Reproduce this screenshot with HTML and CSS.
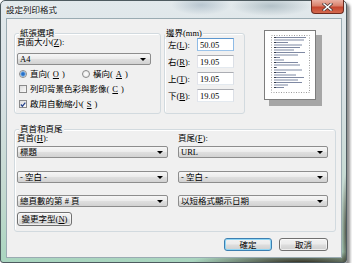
FILE: index.html
```html
<!DOCTYPE html>
<html lang="zh-Hant">
<head>
  <meta charset="UTF-8" />
  <meta name="viewport" content="width=device-width, initial-scale=1.0"/>
  <title>設定列印格式</title>
  <link rel="stylesheet" href="styles.css">
</head>
<body>
  <div class="window">
    <div class="titlebar">
      <span class="title">設定列印格式</span>
      <div class="close-btn">
        <svg width="11" height="8" viewBox="0 0 11 8">
          <path d="M2 1 L9 7 M9 1 L2 7" stroke="#4b3b3b" stroke-width="3" stroke-linecap="square"/>
          <path d="M2 1 L9 7 M9 1 L2 7" stroke="#ffffff" stroke-width="1.5" stroke-linecap="square"/>
        </svg>
      </div>
    </div>

    <div class="client">
      <div class="top-row">
        <div class="group paper">
          <div class="group-title">紙張選項</div>
          <div class="label">頁面大小(<u>Z</u>):</div>
          <div class="combo combo-size"><span>A4</span><i class="arrow"></i></div>

          <div class="option-row radios">
            <span class="option first"><i class="radio checked"></i>直向(<u>O</u>)</span>
            <span class="option"><i class="radio"></i>橫向(<u>A</u>)</span>
          </div>
          <div class="option-row">
            <span class="option"><i class="check"></i>列印背景色彩與影像(<u>C</u>)</span>
          </div>
          <div class="option-row">
            <span class="option">
              <i class="check">
                <svg width="7" height="7" viewBox="0 0 7 7"><path d="M1 3.5 L2.8 5.5 L6.2 1.2" fill="none" stroke="#24428c" stroke-width="1.4"/></svg>
              </i>啟用自動縮小(<u>S</u>)
            </span>
          </div>
        </div>

        <div class="group margins">
          <div class="group-title">邊界(mm)</div>
          <div class="margin-rows">
            <div class="margin-row"><span class="margin-label">左(<u>L</u>):</span><input class="focused" type="text" value="50.05"></div>
            <div class="margin-row"><span class="margin-label">右(<u>R</u>):</span><input type="text" value="19.05"></div>
            <div class="margin-row"><span class="margin-label">上(<u>T</u>):</span><input type="text" value="19.05"></div>
            <div class="margin-row"><span class="margin-label">下(<u>B</u>):</span><input type="text" value="19.05"></div>
          </div>
        </div>

        <div class="preview">
          <svg width="58" height="76" viewBox="0 0 58 76">
            <rect x="5" y="5" width="53" height="71" fill="#a6a6a6"/>
            <rect x="0.5" y="0.5" width="51" height="69" fill="#ffffff" stroke="#7d7d7d"/>
            <rect x="7.5" y="5.5" width="38" height="57" fill="none" stroke="#9c9c9c" stroke-dasharray="1 1.5"/>
            <g fill="#7f89a3">
              <rect x="10" y="7" width="32" height="1"/>
              <rect x="10" y="9.5" width="30" height="1"/>
              <rect x="10" y="12" width="14" height="1"/>
              <rect x="10" y="14.5" width="28" height="1"/>
              <rect x="10" y="17" width="26" height="1"/>
              <rect x="10" y="19.5" width="20" height="1"/>
              <rect x="10" y="22" width="31" height="1"/>
              <rect x="10" y="24.5" width="24" height="1"/>
              <rect x="10" y="27" width="6" height="1"/>
              <rect x="10" y="29.5" width="10" height="1"/>
              <rect x="10" y="32" width="24" height="1"/>
              <rect x="10" y="34.5" width="26" height="1"/>
              <rect x="10" y="37" width="3" height="1"/>
              <rect x="10" y="39.5" width="28" height="1"/>
              <rect x="10" y="42" width="12" height="1"/>
              <rect x="10" y="44.5" width="22" height="1"/>
              <rect x="10" y="47" width="30" height="1"/>
              <rect x="10" y="49.5" width="24" height="1"/>
              <rect x="10" y="52" width="28" height="1"/>
              <rect x="10" y="54.5" width="14" height="1"/>
              <rect x="10" y="57" width="10" height="1"/>
            </g>
            <g fill="#333a48">
              <rect x="10" y="7" width="2" height="1"/>
              <rect x="10" y="12" width="2" height="1"/>
              <rect x="10" y="17" width="2" height="1"/>
              <rect x="10" y="22" width="2" height="1"/>
              <rect x="10" y="27" width="2" height="1"/>
              <rect x="10" y="32" width="2" height="1"/>
              <rect x="10" y="37" width="2" height="1"/>
              <rect x="10" y="42" width="2" height="1"/>
              <rect x="10" y="47" width="2" height="1"/>
              <rect x="10" y="52" width="2" height="1"/>
              <rect x="10" y="57" width="2" height="1"/>
            </g>
          </svg>
        </div>
      </div>

      <div class="group header-footer">
        <div class="group-title">頁首和頁尾</div>
        <div class="hf-columns">
          <div class="hf-col left">
            <div class="label">頁首(<u>H</u>):</div>
            <div class="combo first"><span>標題</span><i class="arrow"></i></div>
            <div class="combo second"><span>- 空白 -</span><i class="arrow"></i></div>
            <div class="combo third"><span>總頁數的第 # 頁</span><i class="arrow"></i></div>
            <button class="btn font-btn">變更字型(<u>N</u>)</button>
          </div>
          <div class="hf-col right">
            <div class="label">頁尾(<u>F</u>):</div>
            <div class="combo first"><span>URL</span><i class="arrow"></i></div>
            <div class="combo second"><span>- 空白 -</span><i class="arrow"></i></div>
            <div class="combo third"><span>以短格式顯示日期</span><i class="arrow"></i></div>
          </div>
        </div>
      </div>

      <div class="actions">
        <button class="btn default">確定</button>
        <button class="btn cancel">取消</button>
      </div>
    </div>
  </div>
</body>
</html>
```

FILE: styles.css
```css
* {
  box-sizing: border-box;
}

body {
  margin: 0;
  background: #ffffff;
  font-family: "Liberation Serif", "Noto Sans CJK TC", serif;
  font-size: 8.5px;
  color: #000;
}

u {
  text-decoration: underline;
}

/* window frame */
.window {
  width: 347px;
  height: 263px;
  border: 1px solid #4e5b60;
  border-radius: 5px 5px 3px 3px;
  background:
    radial-gradient(ellipse 110px 12px at 300px 262px, rgba(40, 30, 18, 0.95), rgba(40, 30, 18, 0)),
    radial-gradient(ellipse 6px 60px at 346px 230px, rgba(40, 30, 18, 0.8), rgba(40, 30, 18, 0)),
    linear-gradient(to bottom, #e2e9ec 0%, #d8e1e4 35%, #c3d9cf 75%, #a9d5bf 100%);
  box-shadow: 3px 3px 3px rgba(0, 0, 0, 0.45);
}

.titlebar {
  display: flex;
  justify-content: space-between;
  align-items: flex-start;
  height: 17px;
  background:
    radial-gradient(ellipse 30px 10px at 200px 4px, rgba(150, 170, 185, 0.55), rgba(150, 170, 185, 0)),
    radial-gradient(ellipse 40px 10px at 270px 5px, rgba(140, 160, 170, 0.55), rgba(140, 160, 170, 0));
}

.title {
  margin: 4px 0 0 5px;
  line-height: 10px;
  color: #111;
  text-shadow: 0 0 3px #fff;
}

.close-btn {
  display: flex;
  justify-content: center;
  align-items: center;
  width: 33px;
  height: 14px;
  margin: -1px 2px 0 0;
  border: 1px solid #6d2b1f;
  border-top: none;
  border-radius: 0 0 4px 4px;
  background: linear-gradient(to bottom, #eab1a3 0%, #d9806b 45%, #c5452e 55%, #d36a4e 100%);
}

/* client area */
.client {
  height: 240px;
  margin: 0 4px 0 5px;
  padding: 8px 0 0 7px;
  border: 1px solid #9aabb2;
  background: #f0f0f0;
}

.top-row {
  display: flex;
  align-items: flex-start;
}

.group {
  margin-top: 6px;
  border: 1px solid #d2dadf;
  border-radius: 3px;
  box-shadow: inset 1px 1px 0 #ffffff;
}

.group-title {
  width: fit-content;
  margin: -7px 0 0 2px;
  padding: 0 1px;
  line-height: 12px;
  background: #f0f0f0;
}

.label {
  line-height: 10px;
  margin-top: -2px;
}

/* paper options */
.paper {
  width: 147px;
  height: 81px;
  padding-left: 2px;
}

.combo {
  display: flex;
  justify-content: space-between;
  align-items: center;
  height: 12px;
  padding: 0 4px 0 2px;
  line-height: 10px;
  border: 1px solid #8d8d8d;
  border-radius: 2px;
  background: linear-gradient(to bottom, #f6f6f6 0%, #ececec 45%, #dedede 55%, #d2d2d2 100%);
}

.combo-size {
  width: 134px;
  margin-top: 6px;
}

.arrow {
  width: 0;
  height: 0;
  border-left: 3px solid transparent;
  border-right: 3px solid transparent;
  border-top: 3.5px solid #000;
}

.option-row {
  display: flex;
  align-items: center;
  height: 10px;
  line-height: 10px;
  margin-top: 5px;
  padding-left: 2px;
}

.option-row.radios {
  margin-top: 4px;
}

.option {
  display: flex;
  align-items: center;
  gap: 3px;
}

.option.first {
  width: 63px;
}

.radio {
  width: 8px;
  height: 8px;
  border: 1px solid #8a8a8a;
  border-radius: 50%;
  background: radial-gradient(circle, #ffffff 0, #e2e2e2 100%);
}

.radio.checked {
  background: radial-gradient(circle, #1f68c2 0, #2a74cc 1.3px, #98c4ee 2.6px, #eef2f5 3px);
}

.check {
  display: flex;
  justify-content: center;
  align-items: center;
  width: 8px;
  height: 8px;
  border: 1px solid #8a8a8a;
  background: linear-gradient(135deg, #dcdcdc 0%, #fbfbfb 100%);
}

/* margins */
.margins {
  width: 81px;
  height: 81px;
  margin-left: 3px;
}

.margins .group-title {
  margin-left: 0;
}

.margin-rows {
  display: flex;
  flex-direction: column;
  gap: 4px;
  margin-top: -1px;
  padding-left: 3px;
}

.margin-row {
  display: flex;
  align-items: center;
  height: 13px;
}

.margin-label {
  width: 29px;
  line-height: 10px;
}

.margin-row input {
  width: 37px;
  height: 13px;
  margin: 0;
  padding: 0 2px;
  font-family: "Liberation Serif", serif;
  font-size: 8.5px;
  color: #000;
  background: #ffffff;
  border: 1px solid;
  border-color: #abadb3 #dbdfe6 #e3e9ef #e2e3ea;
  outline: none;
}

.margin-row input.focused {
  border-color: #5d97cf #8fbbe6 #9cc4ea #8fbbe6;
}

.preview {
  margin: 3px 0 0 19px;
}

.preview svg {
  display: block;
}

/* header and footer */
.header-footer {
  width: 322px;
  height: 103px;
  margin-top: 15px;
  padding-left: 2px;
}

.hf-columns {
  display: flex;
  gap: 10px;
}

.hf-col.left {
  width: 151px;
}

.hf-col.right {
  width: 150px;
}

.hf-col .combo.first {
  margin-top: 3px;
}

.hf-col .combo.second {
  margin-top: 13px;
}

.hf-col .combo.third {
  margin-top: 12px;
}

.btn {
  display: block;
  height: 14px;
  margin: 0;
  padding: 0;
  font-family: "Liberation Serif", "Noto Sans CJK TC", serif;
  font-size: 8.5px;
  line-height: 10px;
  color: #000;
  border: 1px solid #707070;
  border-radius: 3px;
  background: linear-gradient(to bottom, #f2f2f2 0%, #ebebeb 45%, #dddddd 55%, #cfcfcf 100%);
  box-shadow: inset 0 0 0 1px rgba(255, 255, 255, 0.6);
}

.font-btn {
  width: 55px;
  margin-top: 5px;
}

.actions {
  display: flex;
  justify-content: flex-end;
  gap: 7px;
  margin-top: 6px;
  padding-right: 13px;
}

.actions .btn {
  height: 13px;
}

.btn.default {
  width: 48px;
  border-color: #3c7fb1;
  box-shadow: inset 0 0 0 1px #8fd6f5;
}

.btn.cancel {
  width: 49px;
}
```
